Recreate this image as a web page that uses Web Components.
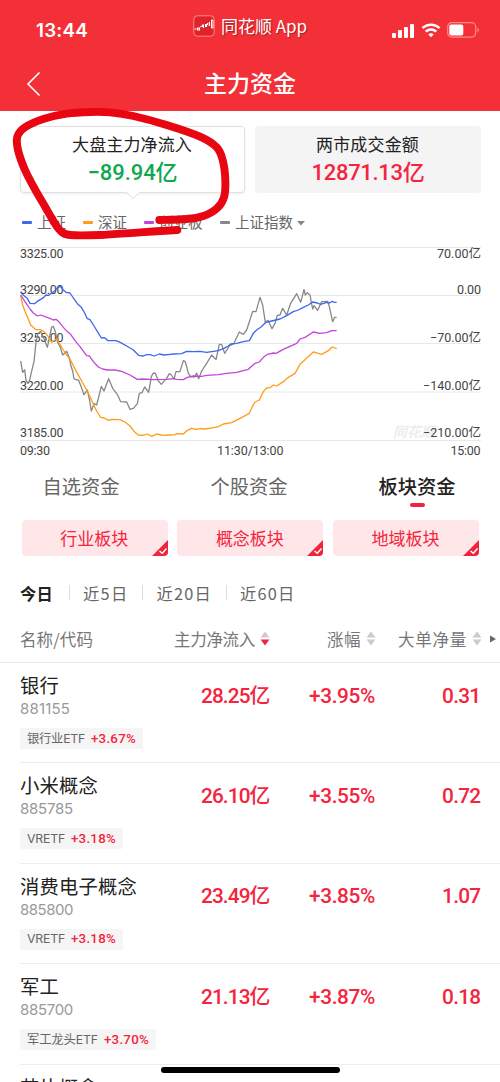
<!DOCTYPE html>
<html lang="zh-CN">
<head>
<meta charset="utf-8">
<title>主力资金</title>
<style>
html,body{margin:0;height:1082px;overflow:hidden;background:#fff}
body{font-family:Roboto,"Noto Sans CJK SC",sans-serif;color:#222}
</style>
</head>
<body>
<fund-app></fund-app>
<script>
const define=(name,html,setup)=>customElements.define(name,class extends HTMLElement{
  connectedCallback(){
    if(this.shadowRoot)return;
    this.attachShadow({mode:'open'}).innerHTML=typeof html==='function'?html(this):html;
    if(setup)setup(this);
  }
});

/* text tracked out or in to fill a given width */
define('fit-text','<style>:host{display:block;white-space:nowrap;flex:none}span{display:inline-block}</style><span><slot></slot></span>',el=>{
  const s=el.shadowRoot.querySelector('span'),w=+el.getAttribute('w');
  const n=[...el.textContent].length;
  s.style.letterSpacing=((w-s.getBoundingClientRect().width)/n)+'px';
  el.style.width=w+'px';
});

define('status-bar',`<style>
:host{display:grid;grid-template-columns:193px 1fr auto;height:56px;color:#fff}
.time{font:600 18.8px/20px Inter,sans-serif;padding:21px 0 0 36px}
.app{display:flex;align-items:center;gap:6px;height:52px;font-size:17px;line-height:24px;font-family:"Noto Sans CJK SC",sans-serif;text-shadow:1px 1px 1px #a02020}
.ic{display:flex;align-items:center;gap:6px;padding:20px 20px 0 0;height:20px}
svg{display:block;flex:none}
</style>
<div class="time"><fit-text w="52">13:44</fit-text></div>
<div class="app"><svg width="22" height="22" viewBox="0 0 22 22" fill="none"><rect x=".8" y=".8" width="20.4" height="20.4" rx="3.5" fill="#e0222b" stroke="#ff8b86"/><path d="M1.500 14h2m1-1v2h2v-2zm3-1 1-1m1 1v-2h1v3m2-1V9m1 3V9m1 1V8m1.800 3V7" stroke="#fff" stroke-width="1.100"/><path d="M16.500 7v4M19 5h1v8h-1.500V5z" stroke="#fff"/></svg><fit-text w="86">同花顺 App</fit-text></div>
<div class="ic"><svg width="24" height="15" viewBox="0 0 24 15" fill="#fff"><rect x="1" y="10" width="4" height="5" rx="1"/><rect x="7" y="7" width="4" height="8" rx="1"/><rect x="13" y="4" width="4" height="11" rx="1"/><rect x="19" y="1" width="4" height="14" rx="1"/></svg>
<svg width="20" height="15" viewBox="0 0 20 15" fill="none" stroke="#fff" stroke-width="2.500"><path d="M1.500 5.200a12 12 0 0 1 17 0M4.800 8.700a7.400 7.400 0 0 1 10.400 0"/><path d="M10 14.200 7.300 11.500a4 4 0 0 1 5.400 0z" fill="#fff" stroke="none"/></svg>
<svg width="33" height="16" viewBox="0 0 33 16"><rect x=".7" y=".7" width="28" height="14.400" rx="4" fill="none" stroke="#ff8d8b" stroke-width="1.200"/><rect x="2.300" y="2.400" width="14" height="11" rx="2" fill="#fff"/><path d="M30.500 5.500q3 2.400 0 5z" fill="#ff8d8b"/></svg></div>`);
customElements.whenDefined('status-bar');

define('nav-bar',`<style>:host{display:grid;grid-template-columns:204px 1fr;height:55px;color:#fff;align-items:center;font:500 23px/30px "Noto Sans CJK SC",sans-serif}svg{display:block;margin-left:26px}fit-text{margin-bottom:3px}</style>
<svg width="16" height="26" viewBox="0 0 16 26" fill="none" stroke="#fff" stroke-width="1.600"><path d="M13.500 1.500 2 13l11.500 11.500"/></svg><fit-text w="93"><slot></slot></fit-text>`);

define('sum-card',el=>`<style>
:host{display:flex;flex-direction:column;align-items:center;box-sizing:border-box;height:67px;border-radius:4px;background:#f4f4f4;position:relative;padding-top:6px}
:host([active]){background:#fff;border:1px solid #e0e0e0;box-shadow:0 1px 3px #0001;padding-top:5px}
.t{font:400 17px/24px "Noto Sans CJK SC",sans-serif;margin-right:1px}
.v{font:500 22px/34px Roboto,"Noto Sans CJK SC",sans-serif;color:var(--c)}
svg{position:absolute;left:105px;top:65px}
</style><div class="t"><slot></slot></div><div class="v"><fit-text w="${el.getAttribute('w')}">${el.getAttribute('value')}</fit-text></div>${el.hasAttribute('active')?'<svg width="14" height="8" viewBox="0 0 14 8"><path d="M0 0 7 6.500 14 0" fill="#fff" stroke="#ddd"/></svg>':''}`);

define('legend-item',el=>`<style>:host{display:flex;align-items:center;gap:5px;font:400 14.500px/20px "Noto Sans CJK SC",sans-serif;color:#666}i{width:10px;height:3px;border-radius:1px;background:${el.getAttribute('color')}}</style><i></i><fit-text w="${el.getAttribute('w')}"><slot></slot></fit-text>`);

define('flow-chart',()=>{
  const rows=[[247.5,258.3,'3325.00','70.00亿',44],[295.5,293.6,'3290.00','0.00',24],[343.5,341.8,'3255.00','−70.00亿',51],[392,390.2,'3220.00','−140.00亿',58],[440.5,437.4,'3185.00','−210.00亿',58]];
  const line=(c,p)=>`<polyline transform="translate(0 235) scale(.33333)" fill="none" stroke="${c}" stroke-width="3.900" stroke-linejoin="round" points="${p}"/>`;
  return `<style>:host{display:block;height:220px}svg{display:block}text{font:400 12.500px Roboto,"Noto Sans CJK SC",sans-serif;fill:#444}.wm{font:italic 700 14px "Noto Sans CJK SC",sans-serif;fill:#ededed}</style>
<svg width="500" height="220" viewBox="0 240 500 220">
${rows.map(r=>`<path d="M20 ${r[0]}H481" stroke="#e8e8e8"/>`).join('')}
<text class="wm" x="393" y="437" textLength="42">同花顺</text>
${rows.map(r=>`<text x="20" y="${r[1]}" textLength="43.500">${r[2]}</text><text x="${481-r[4]}" y="${r[1]}" textLength="${r[4]}">${r[3]}</text>`).join('')}
<text x="20" y="455" textLength="30">09:30</text><text x="217" y="455" textLength="66.500">11:30/13:00</text><text x="450.500" y="455" textLength="30">15:00</text>
${line('#878787','62,378 68,412 74,404 78,436 84,444 88,440 94,412 102,380 108,322 114,295 122,290 130,306 142,337 150,300 155,276 160,274 166,290 172,320 180,335 188,360 200,349 208,368 212,390 218,408 222,432 236,436 244,457 252,479 262,465 268,492 274,528 282,506 290,510 304,454 312,468 326,431 338,460 352,478 362,500 380,501 390,523 400,520 412,506 418,475 426,473 434,456 446,472 454,425 460,414 466,415 474,436 484,448 500,430 508,416 514,420 522,432 528,410 540,410 550,377 556,380 565,415 572,425 583,426 590,414 596,431 605,408 620,385 635,360 648,374 658,328 665,328 674,355 688,333 702,325 718,291 730,298 740,285 758,229 768,230 780,187 788,210 796,262 804,256 816,281 825,265 832,241 840,240 848,220 860,240 872,205 890,176 902,202 912,164 916,180 922,173 930,180 938,222 942,212 953,226 965,200 983,199 988,215 998,260 1004,247 1010,247')}
${line('#ff9c1a','62,182 68,210 76,232 84,250 92,270 108,284 120,284 132,290 145,305 155,322 170,311 178,325 190,345 200,360 210,372 220,392 232,415 245,438 258,462 270,485 280,508 290,528 302,547 313,549 325,556 335,553 360,554 375,561 390,573 405,592 415,600 430,601 442,597 455,604 470,597 490,601 510,600 525,599 530,596 550,597 562,586 575,580 588,583 600,581 615,582 640,578 655,575 670,567 695,563 720,550 747,536 757,515 765,501 778,495 790,470 800,459 810,458 820,450 830,453 850,440 865,427 885,415 900,388 915,374 940,351 965,358 985,347 996,336 1010,341')}
${line('#c445dc','62,180 75,200 90,222 100,234 112,243 122,240 135,245 150,250 160,255 168,253 178,262 190,277 202,290 212,298 225,317 240,335 260,362 268,363 280,380 295,396 308,402 322,405 345,405 365,409 390,420 412,433 430,432 460,434 500,433 520,431 530,433 550,434 562,427 580,423 605,424 620,421 655,419 680,415 710,412 745,403 765,385 778,381 790,367 803,358 820,354 828,355 850,343 875,332 890,325 900,312 915,307 940,291 960,295 980,293 995,287 1010,287')}
${line('#3c67ee','62,172 72,182 82,190 90,205 104,206 112,199 122,193 130,188 138,180 146,181 154,175 164,168 174,156 182,155 190,165 198,172 210,174 220,189 232,206 244,217 254,234 262,251 270,254 282,273 292,289 304,309 314,308 324,317 348,317 362,323 380,333 400,345 416,361 430,363 440,359 450,359 462,363 478,357 492,360 510,358 522,357 545,356 560,349 580,350 600,349 620,352 640,349 655,347 672,340 685,333 692,327 710,325 730,320 748,317 760,295 770,285 782,277 798,262 815,258 840,252 860,242 880,230 895,225 910,217 925,210 938,201 952,204 962,208 980,202 988,204 997,199 1003,202 1010,202')}
</svg>`;
});

define('fund-tab',`<style>:host{display:flex;flex-direction:column;align-items:center;font:400 19.300px/28px "Noto Sans CJK SC",sans-serif;color:#666;height:47px;padding-top:12px;box-sizing:border-box}:host([active]){color:#222;font-weight:500}i{display:none;width:15px;height:4px;border-radius:2px;background:#ee2440;margin-top:3px}:host([active]) i{display:block}</style><fit-text w="77"><slot></slot></fit-text><i></i>`);

define('check-chip',`<style>:host{display:flex;align-items:center;justify-content:center;height:36px;border-radius:4px;background:#ffe7e9;color:#f5243c;font:400 17px/24px "Noto Sans CJK SC",sans-serif;position:relative;overflow:hidden}svg{position:absolute;right:0;bottom:0}</style><fit-text w="69"><slot></slot></fit-text><svg width="16" height="16" viewBox="0 0 16 16"><path d="M16 0v16H0z" fill="#f0243c"/><path d="m7.500 11 2.800 2.300L14.500 8.500" fill="none" stroke="#fff" stroke-width="1.400"/></svg>`);

define('sort-mark',el=>`<style>:host{display:block;width:10px;height:16px}svg{display:block}</style><svg width="10" height="16" viewBox="0 0 10 16"><path d="M5 .5 9.500 6.500h-9z" fill="#ccc"/><path d="M.5 8.500h9L5 14.500z" fill="${el.hasAttribute('down')?'#ee2440':'#ccc'}"/></svg>`);

define('table-head',`<style>:host{display:grid;grid-template-columns:154px 153px 71px 92px 10px;height:46px;padding:0 0 2px 20px;border-bottom:1px solid #e8e8e8;box-sizing:border-box;font:400 16.500px/24px "Noto Sans CJK SC",sans-serif;color:#777;align-items:center}div{display:flex;align-items:center;gap:5px}svg{display:block}</style>
<div><fit-text w="73">名称/代码</fit-text></div><div><fit-text w="81">主力净流入</fit-text><sort-mark down></sort-mark></div><div><fit-text w="34">涨幅</fit-text><sort-mark></sort-mark></div><div><fit-text w="69">大单净量</fit-text><sort-mark></sort-mark></div><svg width="7" height="8" viewBox="0 0 7 8"><path d="M0 .5 6 4 0 7.500z" fill="#666"/></svg>`);

define('sector-row',el=>{
  const a=k=>el.getAttribute(k);
  return `<style>
:host{display:grid;grid-template-columns:181px 108px 133px 1fr;height:100.400px;margin-left:20px;border-bottom:1px solid #ececec;box-sizing:border-box}
.n{font:400 19.300px/26px "Noto Sans CJK SC",sans-serif;color:#222;margin-top:9px}
.c{font:400 15px/20px Inter,sans-serif;color:#999;margin-top:1px}
.g{display:flex;align-items:center;width:max-content;height:21px;margin-top:9px;padding:0 7px;gap:6px;background:#f5f5f5;border-radius:2px;font:400 12.300px/20px Inter,"Noto Sans CJK SC",sans-serif;color:#666}
.g b{font:500 13.300px/20px Roboto,sans-serif;color:#f5243c}
.v{font:500 20.800px/28px Roboto,"Noto Sans CJK SC",sans-serif;color:#f5243c;margin-top:18.500px}
</style><div><div class="n"><fit-text w="${a('nw')}">${a('name')}</fit-text></div>${a('code')?`<div class="c"><fit-text w="${a('cw')}">${a('code')}</fit-text></div><div class="g"><fit-text w="${a('tw')}">${a('etf')}</fit-text><b><fit-text w="45">${a('ep')}</fit-text></b></div>`:''}</div>${a('code')?`<div class="v"><fit-text w="68.500">${a('flow')}</fit-text></div><div class="v"><fit-text w="66">${a('chg')}</fit-text></div><div class="v"><fit-text w="38.500">${a('net')}</fit-text></div>`:''}`;
});

define('ink-stroke',`<style>:host{position:absolute;left:0;top:0;pointer-events:none}svg{display:block}</style><svg width="250" height="250" viewBox="0 0 250 250" fill="none" stroke="#e90613" stroke-linecap="round"><path/></svg>`,el=>{
  const p=[[478,330,0],[560,327],[610,318],[650,296],[672,262],[676,210],[668,150],[650,112],[600,80],[500,45],[400,18],[330,7],[270,6],[200,11],[130,27],[75,52],[52,80],[54,120],[75,180],[105,238],[137,293],[160,333],[182,363],[210,375],[300,375],[420,367],[532,360]].map(q=>[q[0]/3,110+q[1]/3]);
  let d='M'+p[0];
  for(let i=0;i<p.length-1;i++){
    const a=p[i-1]||p[i],b=p[i],c=p[i+1],e=p[i+2]||c;
    d+=`C${b[0]+(c[0]-a[0])/6} ${b[1]+(c[1]-a[1])/6} ${c[0]-(e[0]-b[0])/6} ${c[1]-(e[1]-b[1])/6} ${c[0]} ${c[1]}`;
  }
  const path=el.shadowRoot.querySelector('path');
  path.setAttribute('d',d);path.setAttribute('stroke-width','7.9');
});

define('fund-app',`<style>
:host{display:block;position:relative;width:500px;height:1082px;overflow:hidden;background:#fff}
header{background:#f33038;height:111px}
.cards{display:grid;grid-template-columns:225px 226px;gap:10px;padding:15px 0 0 20px}
.legend{display:flex;height:47px;align-items:center;padding:11px 0 0 22px;box-sizing:border-box}
.legend svg{margin:2px 0 0 4px}
.tabs{display:grid;grid-template-columns:repeat(3,168px);margin-left:-3px;height:60px}
.chips{display:grid;grid-template-columns:repeat(3,146px);gap:9.700px;padding-left:21.700px}
.days{display:flex;align-items:center;height:73px;padding-left:20px;font:400 16.300px/24px "Noto Sans CJK SC",sans-serif;color:#666;gap:13.500px;margin-bottom:-12px}
.days i{width:1px;height:15px;background:#ddd}
.days b{font-weight:700;color:#222;margin-right:2px}
.home{position:absolute;left:161px;top:1067px;width:179px;height:6px;border-radius:3px;background:#000}
</style>
<header><status-bar></status-bar><nav-bar>主力资金</nav-bar></header>
<div class="cards"><sum-card active w="90" value="−89.94亿" style="--c:#0fa850"><fit-text w="120">大盘主力净流入</fit-text></sum-card><sum-card w="113" value="12871.13亿" style="--c:#f5243c"><fit-text w="103">两市成交金额</fit-text></sum-card></div>
<div class="legend"><legend-item color="#3c67ee" w="29" style="margin-right:17px">上证</legend-item><legend-item color="#ff9c1a" w="29" style="margin-right:17px">深证</legend-item><legend-item color="#c445dc" w="44" style="margin-right:17px">创业板</legend-item><legend-item color="#878787" w="58">上证指数</legend-item><svg width="8" height="5" viewBox="0 0 8 5"><path d="M0 0h8L4 4.500z" fill="#888"/></svg></div>
<flow-chart></flow-chart>
<div class="tabs"><fund-tab>自选资金</fund-tab><fund-tab>个股资金</fund-tab><fund-tab active>板块资金</fund-tab></div>
<div class="chips"><check-chip>行业板块</check-chip><check-chip>概念板块</check-chip><check-chip>地域板块</check-chip></div>
<div class="days"><b><fit-text w="33">今日</fit-text></b><i></i><fit-text w="45.500">近5日</fit-text><i></i><fit-text w="55.500">近20日</fit-text><i></i><fit-text w="55.500">近60日</fit-text></div>
<table-head></table-head>
<sector-row name="银行" nw="39" code="881155" cw="50" etf="银行业ETF" tw="58" ep="+3.67%" flow="28.25亿" chg="+3.95%" net="0.31"></sector-row>
<sector-row name="小米概念" nw="78" code="885785" cw="53" etf="VRETF" tw="38" ep="+3.18%" flow="26.10亿" chg="+3.55%" net="0.72"></sector-row>
<sector-row name="消费电子概念" nw="117" code="885800" cw="53" etf="VRETF" tw="38" ep="+3.18%" flow="23.49亿" chg="+3.85%" net="1.07"></sector-row>
<sector-row name="军工" nw="39" code="885700" cw="53" etf="军工龙头ETF" tw="71" ep="+3.70%" flow="21.13亿" chg="+3.87%" net="0.18"></sector-row>
<sector-row name="芯片概念" nw="78"></sector-row>
<div class="home"></div><ink-stroke></ink-stroke>`);
</script>
</body>
</html>
